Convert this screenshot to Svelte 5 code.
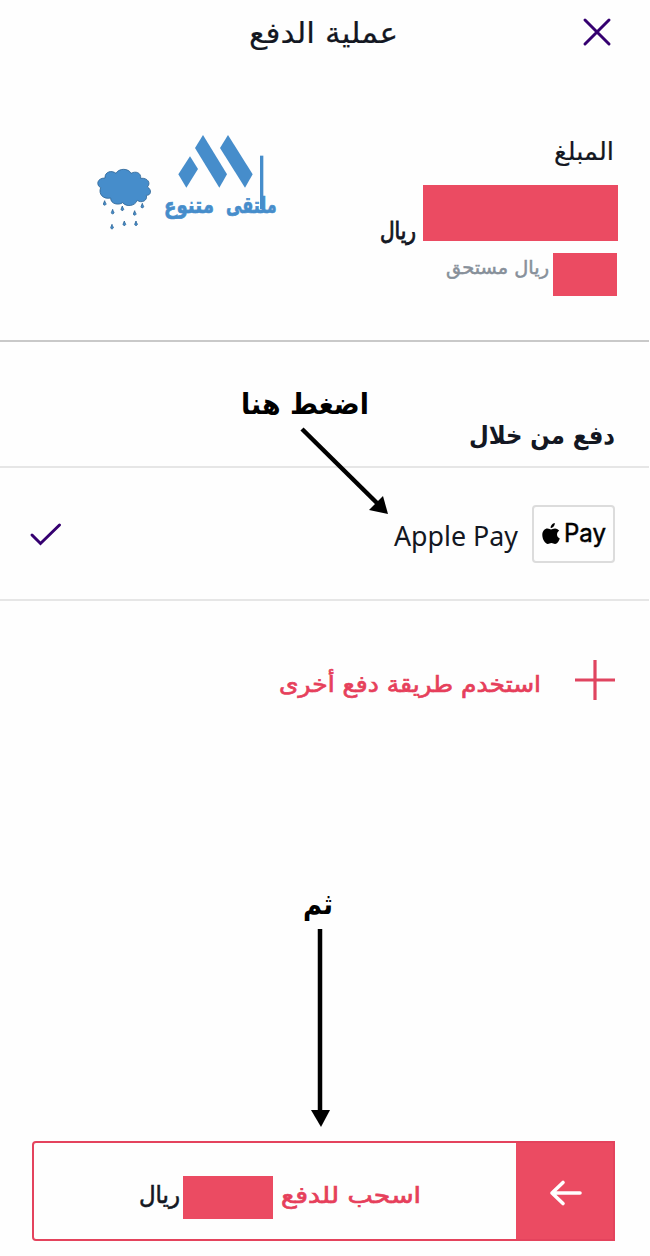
<script lang="ts">
	const drops = [
		[74, 250],
		[98, 276],
		[127, 266],
		[164, 280],
		[187, 258],
		[96, 321],
		[133, 311],
		[168, 311]
	];
</script>

{#snippet label(text: string, width: number, height: number, baseline: number, kind: string)}
	<svg class="label {kind}" {width} {height}>
		<text
			x={kind === 'latin' || kind === 'mark' ? 0 : width}
			y={baseline}
			textLength={width}
			lengthAdjust="spacingAndGlyphs">{text}</text
		>
	</svg>
{/snippet}

<main class="screen" dir="rtl">
	<header class="topbar">
		<button class="close" aria-label="إغلاق">
			<svg width="28" height="28" viewBox="0 0 28 28">
				<path d="M2 2 26 26M26 2 2 26" />
			</svg>
		</button>
		<h1>{@render label('عملية الدفع', 149, 60, 43, 'title')}</h1>
	</header>

	<section class="summary">
		<div class="amounts">
			<div class="caption">{@render label('المبلغ', 60, 45, 20, 'caption-text')}</div>
			<div class="total">
				<span class="hidden-total"></span>
				{@render label('ريال', 36, 56, 54, 'currency')}
			</div>
			<div class="due">
				<span class="hidden-due"></span>
				{@render label('ريال مستحق', 103, 43, 21, 'muted')}
			</div>
		</div>

		<svg class="brand" width="220" height="120" viewBox="0 0 660 360">
			<path
				class="cloud"
				d="M62 203C48 196 50 174 75 174C74 154 96 150 108 160C116 144 146 144 153 160C167 152 184 158 182 175C203 172 214 190 202 201C217 209 213 227 199 226C204 242 184 251 172 241C164 260 138 261 128 248C116 257 91 252 92 234C70 239 54 222 62 203Z"
			/>
			{#each drops as [x, y]}
				<path class="drop" d="M{x} {y - 8}C{x + 1} {y - 2} {x + 5} {y} {x + 4} {y + 3}C{x + 2} {y + 7} {x - 4} {y + 6} {x - 4} {y + 2}Z" />
			{/each}
			<path d="M330 109 354 147 319 203 295 163Z" />
			<path d="M369 45 441 163 418 203 345 84Z" />
			<path d="M444 45 518 163 495 203 420 84Z" />
			<rect x="540" y="107" width="10" height="160" />
			<text class="wordmark" x="590" y="279" textLength="152" lengthAdjust="spacingAndGlyphs">ملتقى</text>
			<text class="wordmark" x="402" y="279" textLength="150" lengthAdjust="spacingAndGlyphs">متنوع</text>
		</svg>
	</section>

	<section class="methods">
		<h2>{@render label('دفع من خلال', 146, 125, 102, 'heading')}</h2>
		<div class="method">
			<div class="wallet">
				<span class="badge" dir="ltr">
					<svg width="18" height="22" viewBox="0 0 18 22">
						<path
							d="M12.8 0C12.9 2.7 10.9 5 8.7 5 8.4 2.6 10.6.3 12.8 0ZM9 6.4C10.1 6.4 11.1 5.4 13 5.4 14.9 5.4 16.4 6.5 17.2 7.7 14 9.6 14.5 14.1 17.8 15.4 16.8 18 15.2 20.9 13.1 20.9 11.7 20.9 11 20.1 9.4 20.1 7.8 20.1 7.1 20.9 5.8 20.9 3.3 20.9.3 16.2.3 12 .3 7.8 2.8 5.4 5.4 5.4 7 5.4 8.2 6.4 9 6.4Z"
						/>
					</svg>
					{@render label('Pay', 42, 40, 28, 'mark')}
				</span>
				{@render label('Apple Pay', 124, 60, 42, 'latin')}
			</div>
			<svg class="check" width="32" height="24" viewBox="0 0 32 24">
				<path d="M2 13 10.500 21.500 29.500 3" />
			</svg>
		</div>
	</section>

	<div class="add-method">
		<svg class="plus" width="40" height="40" viewBox="0 0 40 40">
			<path d="M20 0V40M0 20H40" />
		</svg>
		{@render label('استخدم طريقة دفع أخرى', 262, 40, 32, 'action')}
	</div>

	<footer>
		<button class="slide">
			<span class="handle">
				<svg width="32" height="26" viewBox="0 0 32 26">
					<path d="M30 13H2M13 2.500 2 13 13 23.500" />
				</svg>
			</span>
			<span class="slide-text">
				{@render label('اسحب للدفع', 140, 43, 27, 'action')}
				<span class="hidden-pay"></span>
				{@render label('ريال', 41, 43, 27, 'pay-currency')}
			</span>
		</button>
	</footer>

	<svg class="notes" width="650" height="1256" viewBox="0 0 650 1256">
		<text x="369" y="414" textLength="128" lengthAdjust="spacingAndGlyphs">اضغط هنا</text>
		<path class="shaft" d="M302 429 380 506" />
		<path d="M388 514 369 510 383 496Z" />
		<text x="333" y="914" textLength="30" lengthAdjust="spacingAndGlyphs">ثم</text>
		<path class="shaft" d="M320 929V1112" />
		<path d="M311 1110H330L321 1127Z" />
	</svg>
</main>

<style>
	:global(body) {
		margin: 0;
		background: #fff;
	}

	.screen {
		position: relative;
		display: flex;
		flex-direction: column;
		box-sizing: border-box;
		width: 650px;
		height: 1256px;
		padding-right: 1px;
		overflow: hidden;
		background: #fefefe;
		color: #131722;
		font-family: 'DejaVu Sans', sans-serif;
	}

	svg {
		display: block;
		flex: none;
		overflow: visible;
	}

	h1,
	h2 {
		margin: 0;
	}

	button {
		padding: 0;
		border: 0;
		background: none;
		font: inherit;
	}

	.label {
		fill: #131722;
		font-size: 24px;
		font-weight: 400;
	}

	.title {
		stroke: #131722;
		stroke-width: 0.2;
		font-size: 29px;
	}

	.caption-text {
		stroke: #131722;
		stroke-width: 0.2;
		font-size: 25px;
	}

	.currency {
		font-size: 24px;
		stroke: #131722;
		stroke-width: 0.9;
	}

	.muted {
		fill: #87909a;
		stroke: #87909a;
		stroke-width: 0.5;
		font-size: 19px;
	}

	.heading {
		font-size: 25px;
		font-weight: 700;
	}

	.action {
		fill: #e63f5b;
		stroke: #e63f5b;
		stroke-width: 0.7;
		font-size: 23px;
	}

	.pay-currency {
		stroke: #131722;
		stroke-width: 0.6;
	}

	.latin {
		direction: ltr;
		font-family: 'Noto Sans', sans-serif;
		font-size: 26.500px;
	}

	.mark {
		direction: ltr;
		fill: #000;
		stroke: #000;
		stroke-width: 0.5;
		font-family: Inter, sans-serif;
		font-size: 25px;
	}

	.topbar {
		display: grid;
		grid-template-columns: 1fr auto 1fr;
		align-items: start;
		height: 120px;
		padding: 0 38px 0 35px;
	}

	.topbar h1 {
		margin-left: 4px;
		margin-right: 4px;
	}

	.close {
		justify-self: start;
		margin-top: 18px;
	}

	.close path,
	.check path {
		fill: none;
		stroke: #350070;
		stroke-width: 3;
		stroke-linecap: round;
	}

	.summary {
		display: flex;
		justify-content: space-between;
		box-sizing: border-box;
		height: 222px;
		padding: 0 31px 0 80px;
		border-bottom: 2px solid #c9c9c9;
	}

	.amounts {
		padding-top: 20px;
	}

	.caption {
		padding-right: 4px;
	}

	.total,
	.due {
		display: flex;
	}

	.total {
		gap: 7px;
	}

	.due {
		gap: 4px;
		margin-top: 12px;
		padding-right: 1px;
	}

	.hidden-total,
	.hidden-due,
	.hidden-pay,
	.handle {
		background: #eb4b62;
	}

	.hidden-total {
		width: 195px;
	}

	.hidden-due {
		width: 64px;
	}

	.brand {
		fill: #468dcb;
	}

	.cloud,
	.drop {
		stroke: #2f6698;
		stroke-width: 2.500;
	}

	.wordmark {
		font-size: 68px;
		font-weight: 700;
		stroke: #468dcb;
		stroke-width: 2;
	}

	.methods h2 {
		height: 124px;
		padding-right: 34px;
		border-bottom: 2px solid #e6e6e6;
	}

	.method {
		display: flex;
		align-items: center;
		justify-content: space-between;
		height: 131px;
		padding: 0 34px 0 30px;
		border-bottom: 2px solid #e6e6e6;
	}

	.wallet {
		display: flex;
		align-items: center;
		gap: 14px;
	}

	.badge {
		display: flex;
		align-items: center;
		gap: 4px;
		box-sizing: border-box;
		width: 83px;
		height: 58px;
		padding-left: 8px;
		border: 2px solid #dcdcdc;
		border-radius: 4px;
	}

	.add-method {
		display: flex;
		gap: 34px;
		padding: 59px 34px 0 0;
	}

	.plus path {
		stroke: #e04560;
		stroke-width: 3.200;
	}

	footer {
		margin-top: auto;
		padding: 0 34px 15px 32px;
	}

	.slide {
		display: flex;
		box-sizing: border-box;
		width: 583px;
		height: 100px;
		border: 2px solid #e4435d;
		border-radius: 4px 0 0 4px;
	}

	.handle {
		display: grid;
		place-items: center;
		box-sizing: border-box;
		width: 97px;
		height: 100%;
		padding: 3px 0 0 2px;
	}

	.handle path {
		fill: none;
		stroke: #fff;
		stroke-width: 3.600;
		stroke-linecap: round;
		stroke-linejoin: round;
	}

	.slide-text {
		display: flex;
		align-items: center;
		height: 43px;
		padding: 33px 95px 0 0;
	}

	.hidden-pay {
		width: 90px;
		height: 43px;
		margin: 0 8px 0 3px;
	}

	.notes {
		position: absolute;
		inset: 0;
		pointer-events: none;
		font-size: 29px;
		font-weight: 700;
	}

	.shaft {
		stroke: #000;
		stroke-width: 4.500;
	}
</style>
